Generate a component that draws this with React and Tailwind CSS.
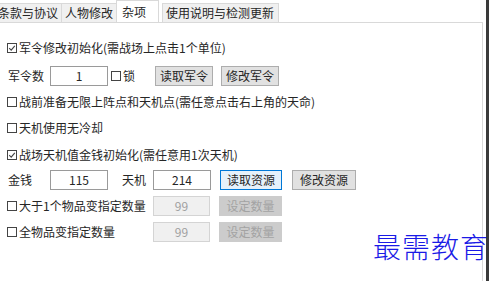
import React from 'react';

const Box = ({ checked }) => (
  <span className="inline-flex w-[10px] h-[10px] border border-[#444] bg-white items-center justify-center mr-[2px] shrink-0">
    {checked && (
      <svg width="8" height="8" viewBox="0 0 8 8">
        <path d="M1.2 4.2 L3.2 6.2 L6.8 1.8" fill="none" stroke="#444" strokeWidth="1.1" />
      </svg>
    )}
  </span>
);

const Check = ({ checked, children }) => (
  <div className="flex items-center whitespace-nowrap">
    <Box checked={checked} />
    <span>{children}</span>
  </div>
);

const Field = ({ value, w = 'w-[58px]', disabled }) => (
  <div
    className={
      disabled
        ? `${w} h-[20px] border border-[#d4d4d4] bg-[#f0f0f0] text-[#a0a0a0] flex items-center justify-center`
        : `${w} h-[20px] border border-[#9a9a9a] bg-white flex items-center justify-center`
    }
  >
    {value}
  </div>
);

const Btn = ({ children, w = 'w-[60px]', focus, disabled }) => {
  let cls = 'border-[#adadad] bg-[#e1e1e1]';
  if (focus) cls = 'border-[#0078d7] bg-[#e5f1fb]';
  if (disabled) cls = 'border-[#cccccc] bg-[#cccccc] text-[#a3a3a3]';
  return (
    <div className={`${w} h-[20px] border ${cls} flex items-center justify-center whitespace-nowrap`}>
      {children}
    </div>
  );
};

const Tab = ({ children, active, className = '' }) =>
  active ? (
    <div className={`h-[22px] bg-white border border-b-0 border-[#d9d9d9] flex items-center pl-[5px] pr-[12px] relative z-10 whitespace-nowrap ${className}`}>
      {children}
    </div>
  ) : (
    <div className={`h-[20px] bg-[#f0f0f0] border border-[#d9d9d9] flex items-center px-[3px] whitespace-nowrap -mb-px ${className}`}>
      {children}
    </div>
  );

export default function App() {
  return (
    <div
      className="w-[495px] h-[281px] bg-white relative overflow-hidden flex text-[12px] text-[#262626] leading-none"
      style={{ fontFamily: '"Noto Sans CJK SC", "Noto Sans", sans-serif' }}
    >
      <div className="w-[486px] flex flex-col">
        <div className="h-[22px] flex items-end -ml-[6px]">
          <Tab>条款与协议</Tab>
          <Tab className="-ml-px">人物修改</Tab>
          <Tab active className="-ml-px">杂项</Tab>
          <Tab className="ml-[3px] pr-[4px]">使用说明与检测更新</Tab>
        </div>
        <div className="flex-1 border-t border-r border-[#d9d9d9] mr-[3px] pl-[7px] pt-[12px] flex flex-col">
          <div className="h-[26px] flex items-center">
            <Check checked>军令修改初始化(需战场上点击1个单位)</Check>
          </div>
          <div className="h-[30px] flex items-center">
            <span className="w-[43px] pl-px">军令数</span>
            <Field value="1" />
            <div className="ml-[3px] w-[44px]">
              <Check>锁</Check>
            </div>
            <Btn w="w-[58px]">读取军令</Btn>
            <div className="ml-[8px]">
              <Btn w="w-[58px]">修改军令</Btn>
            </div>
          </div>
          <div className="h-[22px] flex items-center">
            <Check>战前准备无限上阵点和天机点(需任意点击右上角的天命)</Check>
          </div>
          <div className="h-[30px] flex items-center">
            <Check>天机使用无冷却</Check>
          </div>
          <div className="h-[24px] flex items-center">
            <Check checked>战场天机值金钱初始化(需任意用1次天机)</Check>
          </div>
          <div className="h-[26px] flex items-center">
            <span className="w-[43px] pl-px">金钱</span>
            <Field value="115" />
            <span className="ml-[14px] w-[31px]">天机</span>
            <Field value="214" />
            <div className="ml-[9px]">
              <Btn w="w-[62px]" focus>读取资源</Btn>
            </div>
            <div className="ml-[10px]">
              <Btn w="w-[64px]">修改资源</Btn>
            </div>
          </div>
          <div className="h-[26px] flex items-center">
            <div className="w-[146px]">
              <Check>大于1个物品变指定数量</Check>
            </div>
            <Field value="99" w="w-[57px]" disabled />
            <div className="ml-[9px]">
              <Btn w="w-[63px]" disabled>设定数量</Btn>
            </div>
          </div>
          <div className="h-[26px] flex items-center">
            <div className="w-[146px]">
              <Check>全物品变指定数量</Check>
            </div>
            <Field value="99" w="w-[57px]" disabled />
            <div className="ml-[9px]">
              <Btn w="w-[63px]" disabled>设定数量</Btn>
            </div>
          </div>
        </div>
      </div>
      <div className="w-[3px] bg-[#3a3a3a]" />
      <div className="flex-1 bg-white" />
      <div className="absolute left-[373px] top-[232px] text-[28px] leading-none text-[#1a1ae6] tracking-[1px] font-light"
        style={{ fontFamily: '"Noto Sans CJK SC", serif' }}>
        最需教育
      </div>
    </div>
  );
}
